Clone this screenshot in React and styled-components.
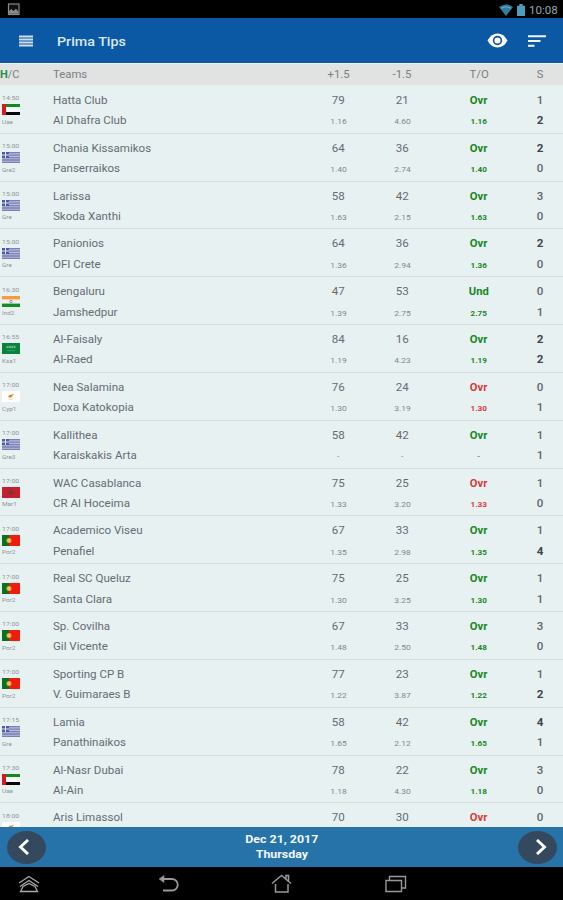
import React from 'react';
import styled, { createGlobalStyle } from 'styled-components';

const GlobalStyle = createGlobalStyle`
  * { box-sizing: border-box; }
  body { margin: 0; background: #000; font-family: Roboto, "Liberation Sans", sans-serif; }
`;

const Screen = styled.div`
  width: 563px;
  height: 900px;
  display: flex;
  flex-direction: column;
  overflow: hidden;
  background: #000;
`;

const StatusBar = styled.header`
  height: 18px;
  flex: none;
  display: flex;
  align-items: center;
  padding: 1px 5px 0 7px;
  color: #8fa9b5;
`;

const StatusIcons = styled.div`
  margin-left: auto;
  display: flex;
  align-items: center;
  gap: 4px;
`;

const Stretch = styled.span`
  display: inline-block;
  white-space: nowrap;
  transform: scaleX(${(p) => p.$x || 1.05});
  transform-origin: ${(p) => p.$from || 'center'};
`;

const Clock = styled.span`
  width: 29px;
  font-size: 11.8px;
  line-height: 16px;
`;

const Toolbar = styled.nav`
  height: 45px;
  flex: none;
  display: flex;
  align-items: center;
  padding: 0 16px 0 18px;
  background: #0b59a5;
  color: #eef4fa;
`;

const Title = styled.h1`
  margin: 0 auto 0 23px;
  font-size: 13.6px;
  font-weight: 500;
  line-height: 20px;
  color: #dce8f4;
`;

const ToolbarActions = styled.div`
  display: flex;
  align-items: center;
  gap: 20px;
`;

const columns = '53px 254px 63px 64px 90px 32px';

const TableHead = styled.div`
  height: 23px;
  flex: none;
  display: grid;
  grid-template-columns: ${columns};
  align-items: center;
  border-top: 1px solid #f0f4f5;
  border-bottom: 1px solid #e8eeee;
  background: #e1e2e2;
  font-size: 10.8px;
  line-height: 14px;
  color: #7b7f83;
`;

const HeadCell = styled.div`
  text-align: ${(p) => (p.$left ? 'left' : 'center')};
`;

const HomeMark = styled.b`
  color: #2d8c4f;
`;

const List = styled.main`
  flex: 1;
  min-height: 0;
  overflow: hidden;
  background: #e8f1f1;
`;

const MatchRow = styled.article`
  height: 47.83px;
  display: grid;
  grid-template-columns: ${columns};
  border-bottom: 1px solid #d6dddd;
`;

const Info = styled.div`
  display: flex;
  flex-direction: column;
  padding: 8.3px 0 0 2px;
  font-size: 6.2px;
  line-height: 8px;
  color: #8f9497;
`;

const InfoText = styled.span`
  height: ${(p) => (p.$below ? '11px' : '10px')};
  padding-top: ${(p) => (p.$below ? '2.5px' : '0')};
`;

const Cell = styled.div`
  display: flex;
  flex-direction: column;
  align-items: ${(p) => (p.$left ? 'flex-start' : 'center')};
  padding-top: 5px;
`;

const Line = styled.span`
  height: 20.3px;
  line-height: 20px;
  font-size: 11px;
  font-weight: ${(p) => p.$weight || 400};
  color: ${(p) => p.$color || '#646c74'};
`;

const Odds = styled(Line)`
  font-size: 7.7px;
  line-height: 22px;
`;

const Footer = styled.footer`
  height: 40px;
  flex: none;
  display: flex;
  align-items: center;
  justify-content: space-between;
  padding: 0 6px 0 7px;
  background: #2573a8;
`;

const DateLabel = styled.div`
  display: flex;
  flex-direction: column;
  align-items: center;
  font-size: 11.8px;
  font-weight: 700;
  line-height: 15px;
  color: #f2f7fb;
`;

const RoundButton = styled.button`
  width: 39px;
  height: 33px;
  padding: 0;
  border: 0;
  border-radius: 50%;
  display: grid;
  place-items: center;
  background: #34495e;
`;

const NavBar = styled.div`
  height: 33px;
  flex: none;
  display: flex;
  align-items: center;
  padding-left: 18px;
`;

const NavSlot = styled.div`
  width: ${(p) => p.$w}px;
  height: 22px;
`;

const FlagSvg = styled.svg`
  display: block;
  flex: none;
`;

function Flag({ code }) {
  const art = {
    ae: (
      <>
        <rect width="18" height="11" fill="#f7faf9" />
        <rect width="18" height="3" fill="#118a22" />
        <rect y="8" width="18" height="3" fill="#080808" />
        <rect width="4" height="11" fill="#d71920" />
      </>
    ),
    gr: (
      <>
        <rect width="18" height="11" fill="#b9bddb" />
        <path d="M0 .7h18M0 3.2h18M0 5.6h18M0 8h18M0 10.4h18" stroke="#7880b5" strokeWidth="1.3" />
        <rect width="7" height="6" fill="#515aa0" />
        <path d="M3.5 0v6M0 3h7" stroke="#e3e6f3" />
      </>
    ),
    in: (
      <>
        <rect width="18" height="11" fill="#f0f2f1" />
        <rect width="18" height="3.4" fill="#f89b3c" />
        <rect y="7.6" width="18" height="3.4" fill="#168b20" />
        <circle cx="9" cy="5.5" r="1.3" fill="none" stroke="#7778a5" strokeWidth=".8" />
      </>
    ),
    sa: (
      <>
        <rect width="18" height="11" fill="#07833c" />
        <path d="M4.5 3.3h9M4.5 4.6h9" stroke="#8fc4a3" strokeWidth=".9" strokeDasharray="2 .4" />
        <path d="M5 7.6h8" stroke="#54a475" strokeWidth=".7" />
      </>
    ),
    cy: (
      <>
        <rect width="18" height="11" fill="#fdfdfb" />
        <path d="M6 5.5l2-2 1 .5 3-1.5-1.8 3-2.2 1.6z" fill="#d98b2b" />
        <path d="M6.5 7.8q2.2 1 4.6 0" fill="none" stroke="#b5bf9b" strokeWidth=".6" />
      </>
    ),
    ma: (
      <>
        <rect width="18" height="11" fill="#c5202f" />
        <path d="M9 3l1.6 4.500-4-2.800h4.800l-4 2.800z" fill="#66402a" stroke="#66402a" strokeWidth=".8" />
      </>
    ),
    pt: (
      <>
        <rect width="18" height="11" fill="#f01c10" />
        <rect width="7" height="11" fill="#0b7020" />
        <circle cx="7" cy="5.5" r="2.500" fill="#e7b52c" />
        <rect x="6" y="4.2" width="2" height="2.500" fill="#f5b9a6" />
      </>
    ),
  };
  return (
    <FlagSvg width="18" height="11" viewBox="0 0 18 11">
      {art[code]}
    </FlagSvg>
  );
}

const matches = [
  ['14:50', 'ae', 'Uae', 'Hatta Club', 'Al Dhafra Club', 79, 21, 'Ovr', '1.16', '4.60', '1.16', 1, 2, true],
  ['15:00', 'gr', 'Gre2', 'Chania Kissamikos', 'Panserraikos', 64, 36, 'Ovr', '1.40', '2.74', '1.40', 2, 0, true],
  ['15:00', 'gr', 'Gre', 'Larissa', 'Skoda Xanthi', 58, 42, 'Ovr', '1.63', '2.15', '1.63', 3, 0, true],
  ['15:00', 'gr', 'Gre', 'Panionios', 'OFI Crete', 64, 36, 'Ovr', '1.36', '2.94', '1.36', 2, 0, true],
  ['16:30', 'in', 'Ind2', 'Bengaluru', 'Jamshedpur', 47, 53, 'Und', '1.39', '2.75', '2.75', 0, 1, true],
  ['16:55', 'sa', 'Ksa1', 'Al-Faisaly', 'Al-Raed', 84, 16, 'Ovr', '1.19', '4.23', '1.19', 2, 2, true],
  ['17:00', 'cy', 'Cyp1', 'Nea Salamina', 'Doxa Katokopia', 76, 24, 'Ovr', '1.30', '3.19', '1.30', 0, 1, false],
  ['17:00', 'gr', 'Gre3', 'Kallithea', 'Karaiskakis Arta', 58, 42, 'Ovr', '-', '-', '-', 1, 1, true],
  ['17:00', 'ma', 'Mar1', 'WAC Casablanca', 'CR Al Hoceima', 75, 25, 'Ovr', '1.33', '3.20', '1.33', 1, 0, false],
  ['17:00', 'pt', 'Por2', 'Academico Viseu', 'Penafiel', 67, 33, 'Ovr', '1.35', '2.98', '1.35', 1, 4, true],
  ['17:00', 'pt', 'Por2', 'Real SC Queluz', 'Santa Clara', 75, 25, 'Ovr', '1.30', '3.25', '1.30', 1, 1, true],
  ['17:00', 'pt', 'Por2', 'Sp. Covilha', 'Gil Vicente', 67, 33, 'Ovr', '1.48', '2.50', '1.48', 3, 0, true],
  ['17:00', 'pt', 'Por2', 'Sporting CP B', 'V. Guimaraes B', 77, 23, 'Ovr', '1.22', '3.87', '1.22', 1, 2, true],
  ['17:15', 'gr', 'Gre', 'Lamia', 'Panathinaikos', 58, 42, 'Ovr', '1.65', '2.12', '1.65', 4, 1, true],
  ['17:30', 'ae', 'Uae', 'Al-Nasr Dubai', 'Al-Ain', 78, 22, 'Ovr', '1.18', '4.30', '1.18', 3, 0, true],
  ['18:00', 'cy', null, 'Aris Limassol', null, 70, 30, 'Ovr', null, null, null, 0, null, false],
];

function Match({ data }) {
  const [time, flag, league, home, away, over, under, tip, overOdds, underOdds, tipOdds, hs, as, won] = data;
  const tipColor = won ? '#16871f' : '#d63a3a';
  const score = (n) => ({
    $weight: n === 2 || n === 4 ? 700 : 500,
    $color: n === 2 || n === 4 ? '#3f454a' : '#5d656b',
  });
  const full = away !== null;
  return (
    <MatchRow>
      <Info>
        <InfoText><Stretch $x={1.12} $from="left">{time}</Stretch></InfoText>
        <Flag code={flag} />
        {full && <InfoText $below><Stretch $x={1.03} $from="left">{league}</Stretch></InfoText>}
      </Info>
      <Cell $left>
        <Line><Stretch $from="left">{home}</Stretch></Line>
        {full && <Line><Stretch $from="left">{away}</Stretch></Line>}
      </Cell>
      <Cell>
        <Line><Stretch>{over}</Stretch></Line>
        {full && <Odds $color="#80868b"><Stretch $x={1.1}>{overOdds}</Stretch></Odds>}
      </Cell>
      <Cell>
        <Line><Stretch>{under}</Stretch></Line>
        {full && <Odds $color="#80868b"><Stretch $x={1.1}>{underOdds}</Stretch></Odds>}
      </Cell>
      <Cell>
        <Line $weight={700} $color={tipColor}><Stretch $x={1.02}>{tip}</Stretch></Line>
        {full && (
          <Odds $weight={700} $color={tipOdds === '-' ? '#80868b' : tipColor}><Stretch $x={1.06}>{tipOdds}</Stretch></Odds>
        )}
      </Cell>
      <Cell>
        <Line {...score(hs)}><Stretch>{hs}</Stretch></Line>
        {full && <Line {...score(as)}><Stretch>{as}</Stretch></Line>}
      </Cell>
    </MatchRow>
  );
}

export default function App() {
  return (
    <Screen>
      <GlobalStyle />
      <StatusBar>
        <svg width="13" height="13" viewBox="0 0 13 13">
          <rect x="1.5" y="1" width="10.5" height="10.5" fill="#111" stroke="#8b8b8b" strokeWidth="1.2" />
          <path d="M2 10.800V8l2.300-2 2 2L9 5.800l2.500 3v2z" fill="#8b8b8b" />
        </svg>
        <StatusIcons>
          <svg width="14" height="12" viewBox="0 0 14 12">
            <path d="M0 3q7-5 14 0L7 12z" fill="#347e9c" />
            <path d="M2 4.200q5-3 10 0" fill="none" stroke="#6bb0c6" />
          </svg>
          <svg width="8" height="12" viewBox="0 0 8 12">
            <path d="M2.300 0h3.400v1.700H8V12H0V1.700h2.300z" fill="#4d9dba" />
          </svg>
          <Clock><Stretch $x={0.98} $from="left">10:08</Stretch></Clock>
        </StatusIcons>
      </StatusBar>
      <Toolbar>
        <svg width="16" height="14" viewBox="0 0 16 14">
          <path d="M1 2.500h14M1 5.500h14M1 8.500h14M1 11.500h14" stroke="#cfdeee" strokeWidth="2" />
        </svg>
        <Title><Stretch $from="left">Prima Tips</Stretch></Title>
        <ToolbarActions>
          <svg width="21" height="15" viewBox="0 0 22 16" preserveAspectRatio="none">
            <path d="M.5 8Q4.500.5 11 .5T21.500 8Q17.500 15.500 11 15.500T.5 8z" fill="#fff" />
            <circle cx="11" cy="8" r="4.100" fill="none" stroke="#0b4f9a" strokeWidth="1.700" />
          </svg>
          <svg width="19" height="14" viewBox="0 0 19 14">
            <path d="M0 2.300h18M0 7h12.500M0 11.700h6.500" stroke="#f2f6fb" strokeWidth="2" />
          </svg>
        </ToolbarActions>
      </Toolbar>
      <TableHead>
        <HeadCell $left><Stretch $from="left" $x={1.02}><HomeMark>H</HomeMark>/C</Stretch></HeadCell>
        <HeadCell $left><Stretch $from="left">Teams</Stretch></HeadCell>
        <HeadCell><Stretch>+1.5</Stretch></HeadCell>
        <HeadCell><Stretch>-1.5</Stretch></HeadCell>
        <HeadCell><Stretch>T/O</Stretch></HeadCell>
        <HeadCell><Stretch>S</Stretch></HeadCell>
      </TableHead>
      <List>
        {matches.map((m, i) => <Match key={i} data={m} />)}
      </List>
      <Footer>
        <RoundButton aria-label="Previous day">
          <svg width="18" height="16" viewBox="0 0 18 16">
            <path d="M10 1L2.500 8l7.500 7" fill="none" stroke="#fff" strokeWidth="2.900" />
          </svg>
        </RoundButton>
        <DateLabel>
          <Stretch>Dec 21, 2017</Stretch>
          <Stretch>Thursday</Stretch>
        </DateLabel>
        <RoundButton aria-label="Next day">
          <svg width="18" height="16" viewBox="0 0 18 16">
            <path d="M8 1l7.500 7L8 15" fill="none" stroke="#fff" strokeWidth="2.900" />
          </svg>
        </RoundButton>
      </Footer>
      <NavBar>
        <NavSlot $w={139}>
          <svg width="22" height="22" viewBox="0 0 22 22" fill="none" stroke="#aaa" strokeWidth="1.300">
            <path d="M1 10l10-6.500L21 10M2 13.500l9-6 9 6M5 13.500l-2.500 5h17l-2.500-5L11 10.500z" />
          </svg>
        </NavSlot>
        <NavSlot $w={114}>
          <svg width="22" height="22" viewBox="0 0 22 22" fill="none" stroke="#999" strokeWidth="1.800">
            <path d="M6 6h9a5.200 5.200 0 0 1 0 11.500H6" />
            <path d="M2 6l5-3.500v7z" fill="#999" strokeWidth=".5" />
          </svg>
        </NavSlot>
        <NavSlot $w={114}>
          <svg width="22" height="22" viewBox="0 0 22 22" fill="none" stroke="#999" strokeWidth="1.500">
            <path d="M1 10.500L10.500 2.500 20 10.500M15 6V2.500h2.500v5.500M4.500 11v8h12.500V11" />
          </svg>
        </NavSlot>
        <NavSlot $w={22}>
          <svg width="22" height="22" viewBox="0 0 22 22" fill="none" stroke="#999" strokeWidth="1.400">
            <path d="M1 7.500h15.500v11H1zM4.500 7.500v-4H20.500v11.500h-4" />
          </svg>
        </NavSlot>
      </NavBar>
    </Screen>
  );
}
